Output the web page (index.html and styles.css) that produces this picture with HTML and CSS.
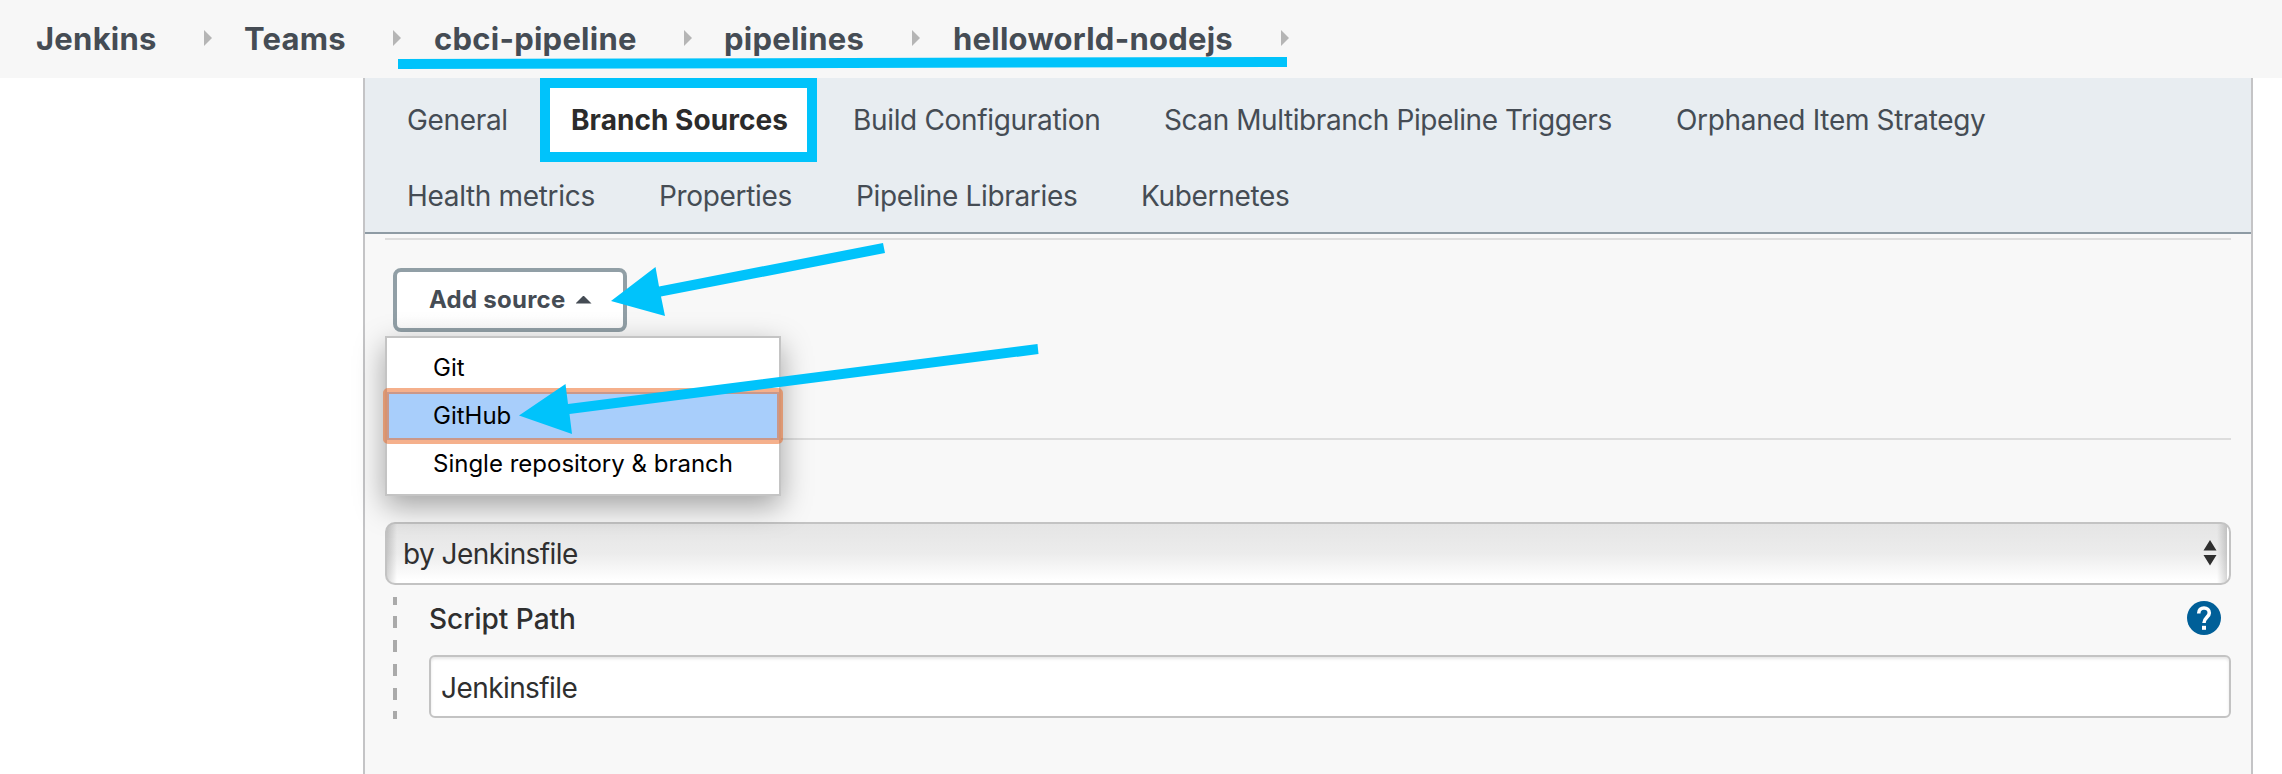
FILE: index.html
```
<!DOCTYPE html>
<html lang="en">
<head>
<meta charset="utf-8">
<title>helloworld-nodejs Config</title>
<link rel="stylesheet" href="styles.css">
</head>
<body>
<header class="breadcrumbs">
  <a class="crumb crumb-root">Jenkins</a><i class="sep"></i>
  <a class="crumb crumb-teams">Teams</a><i class="sep"></i>
  <a class="crumb crumb-team">cbci-pipeline</a><i class="sep"></i>
  <a class="crumb crumb-folder">pipelines</a><i class="sep"></i>
  <a class="crumb crumb-job">helloworld-nodejs</a><i class="sep"></i>
</header>
<main class="panel">
  <nav class="tabs">
    <div class="tab-row">
      <a class="tab general">General</a>
      <a class="tab active">Branch Sources</a>
      <a class="tab build">Build Configuration</a>
      <a class="tab scan">Scan Multibranch Pipeline Triggers</a>
      <a class="tab">Orphaned Item Strategy</a>
    </div>
    <div class="tab-row second">
      <a class="tab health">Health metrics</a>
      <a class="tab props">Properties</a>
      <a class="tab libs">Pipeline Libraries</a>
      <a class="tab">Kubernetes</a>
    </div>
  </nav>
  <div class="content">
    <section class="sources">
      <button class="add">Add source<i class="caret"></i></button>
      <ul class="menu">
        <li>Git</li>
        <li class="selected">GitHub</li>
        <li>Single repository &amp; branch</li>
      </ul>
    </section>
    <section class="mode">
      <div class="select"><span>by Jenkinsfile</span>
        <svg class="updown" width="14" height="26" viewBox="0 0 14 26"><path d="M7 0L13.500 10.500H.5ZM.5 15H13.500L7 25.500Z"/></svg>
      </div>
      <div class="nested">
        <svg class="dashes" width="4" height="122" viewBox="0 0 4 122"><path d="M0 0h4v8H0zM0 19h4v12H0zM0 43h4v12H0zM0 67h4v12H0zM0 91h4v12H0zM0 114h4v8H0z"/></svg>
        <div class="field">
          <div class="label-row"><label class="label">Script Path</label>
            <svg class="help" width="34" height="34" viewBox="0 0 34 34"><circle cx="17" cy="17" r="17"/><path d="M11.700 12.500C11.700 8.800 14 7 17 7s5.300 2 5.300 5c0 4.200-5.300 4.600-5.300 10" /><rect x="15" y="24.800" width="4" height="4"/></svg>
          </div>
          <div class="input">Jenkinsfile</div>
        </div>
      </div>
    </section>
  </div>
</main>
<svg class="annotations" width="2282" height="774" viewBox="0 0 2282 774">
  <path d="M398 59L1287 57V67L398 69Z"/>
  <path d="M611 301L655.500 267L659 286.500L883 243L885 253L661 296.500L665 316Z"/>
  <path d="M519 415.500L565.500 384L568 404L1037.500 344L1038.500 354L569.500 414L572 434Z"/>
</svg>
</body>
</html>
```
FILE: styles.css
```
* { box-sizing: border-box; }
body {
  margin: 0;
  height: 774px;
  overflow: hidden;
  background: #fff;
  color: #2f2f2f;
  font-family: Inter, "Liberation Sans", sans-serif;
}
.breadcrumbs {
  display: flex;
  height: 78px;
  padding: 17px 0 0 36px;
  background: #f7f7f7;
  color: #454c54;
  font-size: 31px;
  font-weight: 700;
  letter-spacing: 0.25px;
  line-height: 44px;
  white-space: nowrap;
}
.crumb-root { width: 168px; }
.crumb-teams { width: 149px; }
.crumb-team { width: 250px; }
.crumb-folder { width: 188px; }
.crumb-job { width: 328px; }
.sep {
  flex: none;
  width: 8px;
  height: 16px;
  margin: 13px 32px 0 0;
  background: #b5b5b5;
  clip-path: polygon(0 0, 100% 50%, 0 100%);
}
.crumb-teams + .sep, .crumb-folder + .sep { margin-right: 33px; }
.panel {
  width: 1890px;
  height: 696px;
  margin-left: 363px;
  border: solid #c4c4c6;
  border-width: 0 2px;
  background: #f8f8f8;
}
.tabs {
  height: 156px;
  border-bottom: 2px solid #8e9ba4;
  background: #e8edf1;
  color: #454c54;
  font-size: 28px;
  white-space: nowrap;
}
.tab-row {
  display: flex;
  height: 84px;
  padding-left: 42px;
  line-height: 84px;
}
.tab-row.second { height: 70px; line-height: 69px; }
.tab { letter-spacing: -0.33px; }
.general { width: 133px; }
.active {
  width: 277px;
  margin-right: 36px;
  border: 10px solid #00c3fb;
  padding-left: 21px;
  background: #fff;
  color: #2b2b2b;
  font-weight: 700;
  letter-spacing: 0.05px;
  line-height: 64px;
}
.build { width: 311px; }
.scan { width: 512px; letter-spacing: -0.43px; }
.health { width: 252px; }
.props { width: 197px; }
.libs { width: 285px; }
.content { padding: 4px 20px 0; }
.sources {
  position: relative;
  height: 202px;
  padding: 28px 0 0 8px;
  border: solid #ddd;
  border-width: 2px 0;
}
.add {
  display: flex;
  align-items: center;
  width: 234px;
  height: 64px;
  padding: 0 0 1px 32px;
  border: 4px solid #919fa6;
  border-radius: 8px;
  background: linear-gradient(#fff 75%, #fafafa);
  color: #454c54;
  font: 700 24px Inter, "Liberation Sans", sans-serif;
  letter-spacing: 0.25px;
}
.caret {
  width: 16px;
  height: 8px;
  margin-left: 10px;
  background: #454c54;
  clip-path: polygon(50% 0, 100% 100%, 0 100%);
}
.menu {
  position: absolute;
  z-index: 1;
  top: 96px;
  left: 0;
  width: 396px;
  height: 160px;
  margin: 0;
  padding: 6px 0;
  border: 2px solid #c4c4c4;
  background: #fff;
  box-shadow: 0 10px 28px rgba(0, 0, 0, .35);
  color: #000;
  font-size: 24px;
  line-height: 48px;
  list-style: none;
}
.menu li { position: relative; height: 48px; padding-left: 46px; }
.menu .selected { background: #a8cefb; }
.selected::after {
  content: "";
  position: absolute;
  inset: -4px;
  border: 6px solid rgba(235, 97, 25, .5);
  border-radius: 5px;
}
.mode { padding-top: 82px; }
.select {
  display: flex;
  align-items: center;
  justify-content: space-between;
  height: 63px;
  padding: 0 12px 0 16px;
  border: 2px solid #c3c3c3;
  border-radius: 10px;
  background:
    linear-gradient(90deg, rgba(0,0,0,.16), transparent 10px, transparent calc(100% - 12px), rgba(0,0,0,.16) calc(100% - 2px), #fff calc(100% - 2px)),
    linear-gradient(#e5e5e5, #ececec 50%, #fff 95%);
  font-size: 28px;
  letter-spacing: -0.57px;
}
.updown { margin-bottom: 1px; fill: #2f2f2f; }
.nested { display: flex; padding: 12px 0 0 8px; }
.dashes { fill: #aaa; }
.field { flex: 1; margin-left: 32px; }
.label-row {
  display: flex;
  align-items: center;
  justify-content: space-between;
  height: 44px;
  padding-right: 10px;
  font-size: 28px;
  font-weight: 500;
}
.help { margin-bottom: 2px; }
.help circle { fill: #005f98; }
.help path { fill: none; stroke: #fff; stroke-width: 3.6; }
.help rect { fill: #fff; }
.input {
  height: 63px;
  margin-top: 14px;
  padding-left: 10px;
  border: 2px solid #c3c3c3;
  border-radius: 6px;
  background: #fff;
  box-shadow: inset 0 2px 3px rgba(0, 0, 0, .1);
  font-size: 28px;
  line-height: 63px;
  letter-spacing: -0.57px;
}
.annotations {
  position: absolute;
  top: 0;
  left: 0;
  z-index: 2;
  fill: #00c3fb;
  pointer-events: none;
}
```
